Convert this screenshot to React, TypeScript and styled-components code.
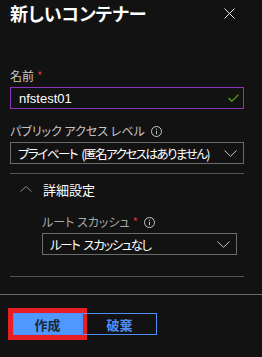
import styled, { createGlobalStyle } from 'styled-components'

const GlobalStyle = createGlobalStyle`
  body {
    margin: 0;
    background: #121212;
    font-family: "Noto Sans CJK JP", "Noto Sans", sans-serif;
    font-feature-settings: "palt";
    color: #ffffff;
  }
`

const Panel = styled.div`
  width: 262px;
  height: 357px;
  background: #121212;
  display: flex;
  flex-direction: column;
  overflow: hidden;
`

const Header = styled.header`
  display: flex;
  align-items: center;
  justify-content: space-between;
  height: 26px;
  padding: 0 27px 0 10px;
`

const Title = styled.h1`
  margin: 0;
  font-size: 18px;
  line-height: 26px;
  font-weight: 700;
  color: #ffffff;
`

const CloseButton = styled.button`
  display: flex;
  padding: 0;
  border: none;
  background: none;
  cursor: pointer;
`

const Body = styled.div`
  display: flex;
  flex-direction: column;
  padding: 0 18px 0 10px;
`

const Field = styled.div<{ $top: number }>`
  display: flex;
  flex-direction: column;
  gap: 3px;
  margin-top: ${(p) => p.$top}px;
`

const Label = styled.label<{ $dim?: boolean }>`
  display: flex;
  align-items: center;
  gap: 6px;
  height: 16px;
  font-size: 12px;
  line-height: 16px;
  white-space: nowrap;
  color: ${(p) => (p.$dim ? '#a8a8a8' : '#c8c6c4')};
`

const Required = styled.span`
  color: #d13438;
  margin-left: -3px;
`

const InputBox = styled.div`
  display: flex;
  align-items: center;
  justify-content: space-between;
  height: 22px;
  box-sizing: border-box;
  border: 1px solid #8c35b8;
  padding: 0 4px 0 8px;
  font-family: "Liberation Sans", "Noto Sans", sans-serif;
  font-size: 13px;
  color: #ffffff;
`

const SelectBox = styled.div`
  display: flex;
  align-items: center;
  justify-content: space-between;
  height: 22px;
  box-sizing: border-box;
  border: 1px solid #6b6b6b;
  padding: 0 6px 0 7px;
  font-size: 12.5px;
  letter-spacing: -1.5px;
  word-spacing: 3px;
  white-space: nowrap;
  color: #ffffff;

  svg {
    flex-shrink: 0;
  }
`

const Divider = styled.hr<{ $top: number }>`
  margin: ${(p) => p.$top}px 0 0;
  border: none;
  border-top: 1px solid #555555;
`

const Section = styled.div`
  display: flex;
  flex-direction: column;
  padding: 0 7px 0 32px;
`

const SectionHeader = styled.div`
  display: flex;
  align-items: center;
  height: 20px;
  margin: 5px 0 0 -22px;
  gap: 11px;
  font-size: 13px;
  color: #ffffff;
`

const Footer = styled.footer`
  margin-top: 17px;
  border-top: 1px solid #6a6a6a;
  padding: 18px 13px 0;
  display: flex;
`

const Button = styled.button<{ $primary?: boolean }>`
  height: 22px;
  box-sizing: border-box;
  padding: 0;
  font-family: "Noto Sans CJK JP", sans-serif;
  font-size: 13px;
  font-weight: 700;
  cursor: pointer;
  border: 1px solid #4f8ff7;
  width: ${(p) => (p.$primary ? '69px' : '75px')};
  background: ${(p) => (p.$primary ? '#4f98ff' : 'transparent')};
  color: ${(p) => (p.$primary ? '#1b2a3a' : '#4f8ff7')};
  outline: ${(p) => (p.$primary ? '5px solid #e81e25' : 'none')};
`

const InfoIcon = () => (
  <svg width="11" height="11" viewBox="0 0 11 11" fill="none">
    <circle cx="5.5" cy="5.5" r="5" stroke="#c8c6c4" strokeWidth="1" />
    <line x1="5.5" y1="4.8" x2="5.5" y2="8.2" stroke="#c8c6c4" strokeWidth="1" />
    <circle cx="5.5" cy="3.2" r="0.6" fill="#c8c6c4" />
  </svg>
)

const ChevronDown = () => (
  <svg width="13" height="7" viewBox="0 0 13 7" fill="none">
    <path d="M0.5 0.5 L6.5 6.3 L12.5 0.5" stroke="#c8c6c4" strokeWidth="1" />
  </svg>
)

const ChevronUp = () => (
  <svg width="12" height="6" viewBox="0 0 12 6" fill="none">
    <path d="M0.5 5.5 L6 0.5 L11.5 5.5" stroke="#8a8886" strokeWidth="1" />
  </svg>
)

const Check = () => (
  <svg width="11" height="8" viewBox="0 0 11 8" fill="none">
    <path d="M0.5 4 L3.8 7.2 L10.5 0.6" stroke="#5c9d1c" strokeWidth="1.3" />
  </svg>
)

const CloseIcon = () => (
  <svg width="11" height="11" viewBox="0 0 11 11" fill="none">
    <path d="M0.5 0.5 L10.5 10.5 M10.5 0.5 L0.5 10.5" stroke="#e6e6e6" strokeWidth="1" />
  </svg>
)

function App() {
  return (
    <Panel>
      <GlobalStyle />
      <Header>
        <Title>新しいコンテナー</Title>
        <CloseButton aria-label="閉じる">
          <CloseIcon />
        </CloseButton>
      </Header>

      <Body>
        <Field $top={42}>
          <Label>
            名前 <Required>*</Required>
          </Label>
          <InputBox>
            nfstest01
            <Check />
          </InputBox>
        </Field>

        <Field $top={14}>
          <Label>
            パブリック アクセス レベル <InfoIcon />
          </Label>
          <SelectBox>
            プライベート (匿名アクセスはありません)
            <ChevronDown />
          </SelectBox>
        </Field>

        <Divider $top={9} />

        <Section>
          <SectionHeader>
            <ChevronUp />
            詳細設定
          </SectionHeader>
          <Field $top={15}>
            <Label $dim>
              ルート スカッシュ <Required>*</Required> <InfoIcon />
            </Label>
            <SelectBox>
              ルート スカッシュなし
              <ChevronDown />
            </SelectBox>
          </Field>
        </Section>

        <Divider $top={21} />
      </Body>

      <Footer>
        <Button $primary>作成</Button>
        <Button>破棄</Button>
      </Footer>
    </Panel>
  )
}

export default App
